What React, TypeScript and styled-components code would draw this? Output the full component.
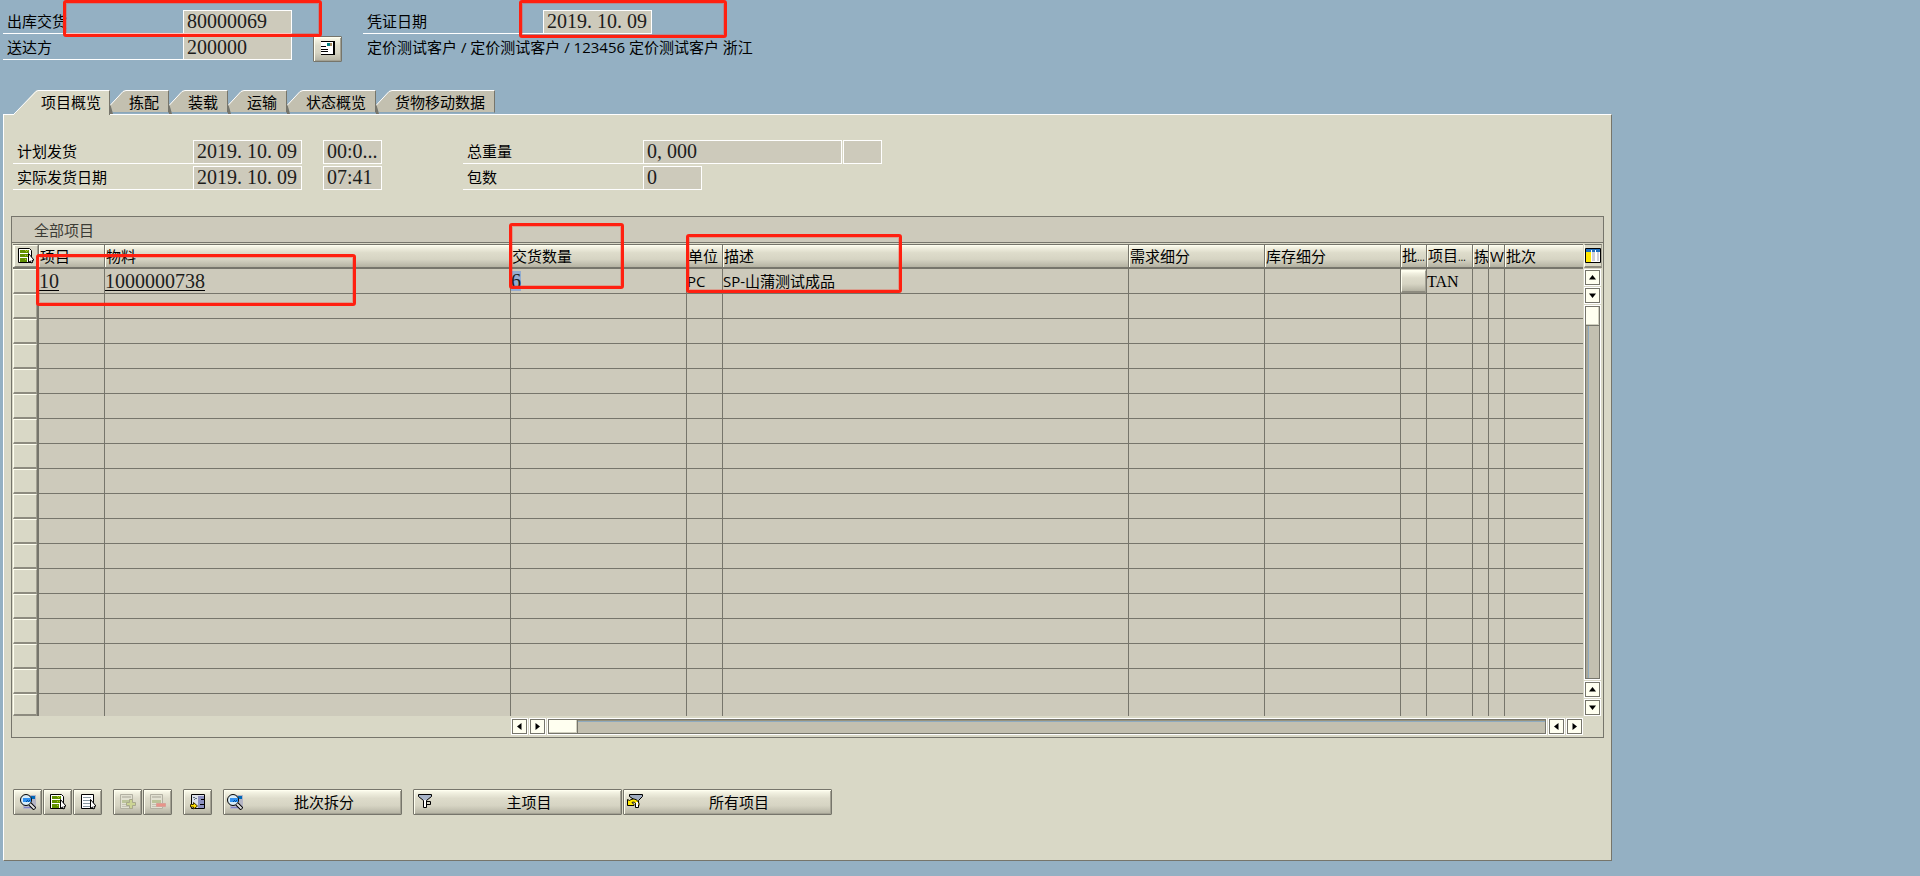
import React from 'react';
import styled, { createGlobalStyle, css } from 'styled-components';

const c = {
  desk: '#94b0c3',
  panel: '#d9d8c6',
  field: '#cdcabb',
  line: '#76756b',
  light: '#fffff0',
  shade: '#a3a193',
  tab: '#c3c0b0',
  mark: '#ff2010',
};
const bevel = `linear-gradient(#fffff0 0, #f1f0e0 12%, #dedccb 35%, #d6d4c3 65%, #b4b2a2 100%)`;

const Global = createGlobalStyle`
  * { box-sizing: border-box; }
  html { background: ${c.desk}; }
  body {
    margin: 0;
    color: #000;
    font-family: "Open Sans", "Noto Sans CJK SC", sans-serif;
    font-size: 15px;
    line-height: 20px;
  }
  button, input { font: inherit; color: inherit; border-radius: 0; }
`;

const Page = styled.div`
  position: relative;
  padding: 10px 0 15px 3px;
`;
const FieldGrid = styled.div<{ $cols: string }>`
  display: grid;
  grid-template-columns: ${(p) => p.$cols};
  row-gap: 2px;
`;
const Field = styled.div`
  display: flex;
  height: 24px;
`;
const Label = styled.label`
  width: 180px;
  flex: none;
  padding: 1px 4px 0;
  border-bottom: 1px solid #fff;
  white-space: nowrap;
`;
const Value = styled.input<{ $w: number }>`
  width: ${(p) => p.$w}px;
  flex: none;
  height: 24px;
  padding: 0 3px 2px;
  border: 1px solid #fff;
  background: ${c.field};
  color: #1c1c1c;
  font: 20px/20px "Liberation Serif", "Noto Sans CJK SC", serif;
  outline: none;
`;
const Address = styled.div`
  padding: 1px 4px 0;
  white-space: nowrap;
`;
const Gap = styled.span<{ $w: number }>`
  width: ${(p) => p.$w}px;
  flex: none;
`;

const Button = styled.button<{ $w: number }>`
  width: ${(p) => p.$w}px;
  height: 26px;
  flex: none;
  display: flex;
  align-items: center;
  justify-content: center;
  padding: 0 3px;
  border: 1px solid ${c.line};
  border-radius: 1px;
  background: ${bevel};
  box-shadow: inset 1px 1px 0 ${c.light}, inset -1px -1px 0 ${c.shade};
`;
const Caption = styled.span`
  flex: 1;
  padding-left: 7px;
  text-align: center;
`;

const Tabs = styled.div`
  display: flex;
  height: 24px;
  margin: 30px 0 0 11px;
  position: relative;
`;
const TabButton = styled.button<{ $active?: boolean }>`
  display: flex;
  height: 24px;
  padding: 0;
  border: 0;
  background: none;
  white-space: nowrap;
  ${(p) => p.$active && css`height: 25px;`}
`;
const TabFace = styled.span<{ $active?: boolean }>`
  height: 100%;
  padding: 1px ${(p) => (p.$active ? 8 : 9)}px 0 3px;
  border-top: 1px solid #fff;
  border-right: 1px solid ${c.line};
  background: ${(p) => (p.$active ? c.panel : c.tab)};
  ${(p) => !p.$active && css`height: 23px; border-bottom: 1px solid #8aa6b9;`}
`;

const Panel = styled.main`
  margin-right: 308px;
  padding: 25px 7px 45px 7px;
  border: 1px solid ${c.line};
  border-top-color: #fff;
  border-left-color: #fff;
  background: ${c.panel};
`;
const Indent = styled.div`
  padding-left: 2px;
`;
const Group = styled.section`
  margin-top: 26px;
  border: 1px solid ${c.line};
`;
const GroupTitle = styled.h2`
  height: 26px;
  margin: 0;
  padding: 3px 22px 0;
  border-bottom: 1px solid ${c.line};
  background: ${c.field};
  color: #3c3c36;
  font-size: 15px;
  font-weight: 400;
  line-height: 20px;
`;
const GridArea = styled.div`
  display: flex;
  padding: 1px 0 1px 1px;
`;
const Table = styled.table`
  flex: 1;
  width: 0;
  table-layout: fixed;
  border-collapse: separate;
  border-spacing: 0;
`;
const Col = styled.col<{ $w?: number }>`
  ${(p) => p.$w && css`width: ${p.$w}px;`}
`;
const Th = styled.th`
  height: 25px;
  padding: 0 0 0 1px;
  border-top: 1px solid ${c.line};
  border-right: 1px solid ${c.line};
  border-bottom: 2px solid ${c.line};
  background: ${bevel};
  box-shadow: inset 1px 1px 0 ${c.light};
  overflow: hidden;
  font-weight: 400;
  text-align: left;
  white-space: nowrap;
  &:last-child { border-right: 0; }
`;
const Dots = styled.span`
  font-size: 10px;
`;
const Row = styled.tr`
  height: 25px;
  &:last-child { height: 22px; }
`;
const Td = styled.td`
  padding: 0;
  border-right: 1px solid ${c.line};
  border-bottom: 1px solid ${c.line};
  background: ${c.field};
  white-space: nowrap;
  overflow: hidden;
  &:last-child { border-right: 0; }
  ${Row}:last-child & { border-bottom: 0; }
`;
const SelectCell = styled(Td)`
  border-right: 2px solid ${c.line};
  border-bottom: 0;
`;
const CellButton = styled.button`
  display: flex;
  align-items: center;
  justify-content: center;
  width: 100%;
  height: 25px;
  padding: 0;
  border: solid;
  border-width: 1px 1px 2px 1px;
  border-color: ${c.light} ${c.shade} #8d8b7f ${c.light};
  background: ${c.panel};
  ${Row}:last-child & { height: 22px; }
`;
const BatchButton = styled(CellButton)`
  height: 23px;
  background: ${bevel};
`;
const HeadButton = styled(CellButton)`
  height: 22px;
  border-width: 1px;
`;
const CellLink = styled.a`
  display: inline-block;
  height: 20px;
  border-bottom: 1px solid #000;
  color: #1c1c1c;
  font: 20px/20px "Liberation Serif", serif;
  text-decoration: none;
  vertical-align: top;
`;
const Quantity = styled.span`
  display: inline-block;
  height: 20px;
  background: #94acd0;
  color: #1c1c1c;
  font: 20px/20px "Liberation Serif", serif;
  vertical-align: top;
`;
const Category = styled.span`
  font: 16px/20px "Liberation Serif", serif;
`;
const FootCell = styled.td`
  height: 20px;
  padding: 1px 0 0;
`;

const HBar = styled.div`
  display: flex;
  gap: 1px;
`;
const VBar = styled.div`
  width: 20px;
  flex: none;
  display: flex;
  flex-direction: column;
  align-items: flex-start;
  gap: 1px;
  padding: 0 1px 20px;
`;
const ConfigButton = styled(CellButton)`
  height: 24px;
  flex: none;
  border-top-color: ${c.line};
`;
const ArrowButton = styled.button`
  width: 17px;
  height: 17px;
  flex: none;
  display: flex;
  align-items: center;
  justify-content: center;
  padding: 0;
  border: 1px solid #fff;
  background: ${c.light};
  box-shadow: inset 0 0 0 1px ${c.line};
`;
const Track = styled.div<{ $vertical?: boolean }>`
  flex: 1;
  display: flex;
  flex-direction: ${(p) => (p.$vertical ? 'column' : 'row')};
  padding: 2px;
  border: 1px solid #fff;
  background: ${c.tab};
  box-shadow: ${(p) => (p.$vertical
    ? `inset 0 0 0 1px ${c.line}, inset 3px 0 0 #aaa798, inset 4px 0 0 #8fabc0`
    : `inset 0 0 0 1px ${c.line}, inset 0 2px 0 #96937f, inset 0 3px 0 #8fabc0`)};
  padding: 1px;
  ${(p) => p.$vertical && css`width: 17px;`}
`;
const Thumb = styled.div<{ $vertical?: boolean }>`
  ${(p) => (p.$vertical
    ? css`height: 19px; border-bottom: 1px solid ${c.line};`
    : css`width: 29px; border-right: 1px solid ${c.line};`)}
  background: ${c.light};
  box-shadow: inset -1px -1px 0 #d0cfbe;
`;

const Toolbar = styled.div`
  display: flex;
  gap: 1px;
  margin-top: 51px;
  padding-left: 2px;
`;
const Mark = styled.div<{ $x: number; $y: number; $w: number; $h: number }>`
  position: absolute;
  left: ${(p) => p.$x}px;
  top: ${(p) => p.$y}px;
  width: ${(p) => p.$w}px;
  height: ${(p) => p.$h}px;
  border: 3px solid ${c.mark};
  border-radius: 3px;
  box-shadow: inset 0 0 0 1px rgba(255, 32, 16, 0.25);
  pointer-events: none;
`;

const Icon = ({ children }: { children: React.ReactNode }) => (
  <svg width="16" height="16" viewBox="0 0 16 16" aria-hidden="true">{children}</svg>
);
const Pointer = () => (
  <path d="M10.500 5.500v9l2-1.500 1 2 1.500-1-1-1.500 2-.5z" fill="#fff" stroke="#000" strokeWidth="1" />
);
const Magnifier = () => (
  <Icon>
    <path d="M3 1h13v14H3z" fill="#b4b4c4" />
    <path d="M11 2h4v3h-4z" fill="#0068b8" />
    <path d="M4 13h7v1H4z" fill="#8080c8" />
    <circle cx="6" cy="6" r="5.500" fill="#d8ecf8" stroke="#000" />
    <path d="M3 4h8v4H3z" fill="#3090f0" />
    <path d="M7 6h1v1H7zM9 6h1v1H9zM8 7h1v1H8zM6 7h1v1H6z" fill="#0050a0" />
    <path d="M10 10l5 5" stroke="#000" strokeWidth="4" />
    <path d="M10 10l4.500 4.500" stroke="#e0e0e0" strokeWidth="2" />
  </Icon>
);
const SelectAll = () => (
  <Icon>
    <path d="M.5.500h11l2 2v12H.5z" fill="#fff" stroke="#000" />
    <path d="M2 2h9v3H2zM2 6h9v3H2zM2 10h7v4H2z" fill="#609000" />
    <path d="M7 2h1v1H7zM9 2h1v1H9zM8 3h1v1H8zM7 7h1v1H7zM9 7h1v1H9zM7 11h1v1H7z" fill="#b0d020" />
    <Pointer />
  </Icon>
);
const DeselectAll = () => (
  <Icon>
    <path d="M1.500.500h12v14h-12z" fill="#fff" stroke="#000" />
    <path d="M3 3h8v1H3zM3 6h8v1H3zM3 9h7v1H3zM3 12h7v1H3z" fill="#8898a0" />
    <Pointer />
  </Icon>
);
const EditRow = ({ remove }: { remove?: boolean }) => (
  <Icon>
    <path d="M.5.500h12v14H.5z" fill="#e2e1d2" stroke="#b2b0a2" />
    <path d="M2 2h9v2H2zM2 10h7v1H2zM2 12h7v1H2z" fill="#c4c2b4" />
    <path d="M2 6h9v3H2z" fill="#bcc49a" />
    {remove
      ? <path d="M6.500 9.500h9v3h-9z" fill="#e89488" stroke="#d8a098" />
      : <path d="M9.500 5.500h3v3h3v3h-3v3h-3v-3h-3v-3h3z" fill="#ccd494" stroke="#a8a88c" />}
  </Icon>
);
const Transfer = () => (
  <Icon>
    <path d="M1.500.500h13v14h-13z" fill="#dce0e8" stroke="#000" />
    <path d="M8 2h6v12H8z" fill="#8c90c0" />
    <path d="M3 3h2v1H3zM5 4h2v1H5zM4 5h1v1H4z" fill="#607080" />
    <path d="M11 5h3v1h-3zM10 10h4v1h-4z" fill="#000" />
    <path d="M.5 10.500h3v-2l4 3.500-4 3v-2h-3z" fill="#ffe000" stroke="#403000" />
  </Icon>
);
const Funnel = () => (
  <Icon>
    <path d="M1.500.500h13v2l-5 4v7h-3v-7l-5-4z" fill="#a8b4c8" stroke="#000" />
    <path d="M7 6h2v7H7z" fill="#fff" />
    <path d="M10 7.500h3.500v3h-3.500" fill="none" stroke="#000" />
  </Icon>
);
const FunnelBack = () => (
  <Icon>
    <path d="M2.500.500h13v2l-4 4v7h-3v-7l-6-4z" fill="#a0acc0" stroke="#000" />
    <path d="M.5 11.500v-6l2 1c3-2.500 8-2 9.500 3v2h-3c0-3-2-4-4-3l2 2v1z" fill="#ffe800" stroke="#000" />
    <path d="M9 8h2v5H9z" fill="#fff" />
  </Icon>
);
const Detail = () => (
  <Icon>
    <path d="M1 1h13v12H1z" fill="#fff" />
    <path d="M1 0h14v14H1v-1h12V1H1z" fill="#000" />
    <path d="M7 2h3v3H7z" fill="#008080" />
    <path d="M10 2h2v3h-2z" fill="#a08860" />
    <path d="M1 5h5v1H1zM1 8h7v1H1zM1 10h7v1H1z" fill="#000" />
  </Icon>
);
const Configure = () => (
  <Icon>
    <path d="M.5.500h15v14H.5z" fill="#fff" stroke="#000" />
    <path d="M1 1h14v3H1z" fill="#2070c0" />
    <path d="M1 4h5v10H1z" fill="#ffe800" />
    <path d="M7 4h3v9H7zM12 4h2v9h-2z" fill="#d0d0d8" />
    <path d="M6 2h1v2H6zM10 2h1v2h-1z" fill="#fff" />
  </Icon>
);
const turns = { up: 0, right: 90, down: 180, left: 270 };
const Arrow = ({ to }: { to: keyof typeof turns }) => (
  <ArrowButton aria-label={to}>
    <svg width="9" height="9" viewBox="0 0 9 9" aria-hidden="true">
      <path d="M4.500 2 8 6.500H1z" transform={`rotate(${turns[to]} 4.500 4.500)`} />
    </svg>
  </ArrowButton>
);

const tabNames = ['项目概览', '拣配', '装载', '运输', '状态概览', '货物移动数据'];
const Tab = ({ name, active }: { name: string; active?: boolean }) => (
  <TabButton $active={active} role="tab" aria-selected={!!active}>
    {active ? (
      <svg width="24" height="25" viewBox="0 0 24 25" aria-hidden="true">
        <path d="M0 24.500 22 .5h2V25H0z" fill={c.panel} />
        <path d="M0 24 22 1.500 24 .5" fill="none" stroke="#fff" />
      </svg>
    ) : (
      <svg width="16" height="24" viewBox="0 0 16 24" aria-hidden="true">
        <path d="M0 15 14 .5h2V23H3z" fill={c.tab} />
        <path d="M0 13v11h3z" fill={c.line} />
        <path d="M0 15.500 13 1.500 16 .5" fill="none" stroke="#fff" />
        <path d="M3 22.500h13" stroke="#8aa6b9" />
      </svg>
    )}
    <TabFace $active={active}>{name}</TabFace>
  </TabButton>
);

const widths = [26, 66, 0, 176, 36, 0, 136, 136, 26, 46, 16, 16, 78];
const heads: React.ReactNode[] = [
  '项目', '物料', '交货数量', '单位', '描述', '需求细分', '库存细分',
  <>批<Dots>…</Dots></>, <>项目<Dots>…</Dots></>, '拣', 'W', '批次',
];
const item: React.ReactNode[] = [
  <CellLink href="#item">10</CellLink>,
  <CellLink href="#material">1000000738</CellLink>,
  <Quantity>6</Quantity>,
  'PC',
  'SP-山蒲测试成品',
  '', '',
  <BatchButton aria-label="批次" />,
  <Category>TAN</Category>,
  '', '', '',
];
const rows = [item, ...Array.from({ length: 17 }, () => heads.map(() => ''))];

export default function App() {
  return (
    <>
      <Global />
      <Page>
        <FieldGrid $cols="360px 1fr">
          <Field>
            <Label htmlFor="delivery">出库交货</Label>
            <Value id="delivery" $w={109} readOnly value="80000069" />
          </Field>
          <Field>
            <Label htmlFor="docdate">凭证日期</Label>
            <Value id="docdate" $w={109} readOnly value="2019. 10. 09" />
          </Field>
          <Field>
            <Label htmlFor="shipto">送达方</Label>
            <Value id="shipto" $w={109} readOnly value="200000" />
            <Gap $w={21} />
            <Button $w={29} aria-label="送达方明细"><Detail /></Button>
          </Field>
          <Address>定价测试客户 / 定价测试客户 / 123456 定价测试客户 浙江</Address>
        </FieldGrid>

        <Tabs role="tablist">
          {tabNames.map((name, i) => <Tab key={name} name={name} active={i === 0} />)}
        </Tabs>

        <Panel>
          <Indent>
            <FieldGrid $cols="450px 1fr">
              <Field>
                <Label htmlFor="plan">计划发货</Label>
                <Value id="plan" $w={109} readOnly value="2019. 10. 09" />
                <Gap $w={21} />
                <Value $w={59} aria-label="计划发货时间" readOnly value="00:0..." />
              </Field>
              <Field>
                <Label htmlFor="weight">总重量</Label>
                <Value id="weight" $w={199} readOnly value="0, 000" />
                <Gap $w={1} />
                <Value $w={39} aria-label="重量单位" readOnly value="" />
              </Field>
              <Field>
                <Label htmlFor="actual">实际发货日期</Label>
                <Value id="actual" $w={109} readOnly value="2019. 10. 09" />
                <Gap $w={21} />
                <Value $w={59} aria-label="实际发货时间" readOnly value="07:41" />
              </Field>
              <Field>
                <Label htmlFor="packs">包数</Label>
                <Value id="packs" $w={59} readOnly value="0" />
              </Field>
            </FieldGrid>
          </Indent>

          <Group>
            <GroupTitle>全部项目</GroupTitle>
            <GridArea>
              <Table>
                <colgroup>{widths.map((w, i) => <Col key={i} $w={w} />)}</colgroup>
                <thead>
                  <tr>
                    <Th><HeadButton aria-label="全选"><SelectAll /></HeadButton></Th>
                    {heads.map((h, i) => <Th key={i}>{h}</Th>)}
                  </tr>
                </thead>
                <tbody>
                  {rows.map((cells, r) => (
                    <Row key={r}>
                      <SelectCell><CellButton aria-label={`选择行 ${r + 1}`} /></SelectCell>
                      {cells.map((cell, i) => <Td key={i}>{cell}</Td>)}
                    </Row>
                  ))}
                </tbody>
                <tfoot>
                  <tr>
                    <FootCell colSpan={3} />
                    <FootCell colSpan={10}>
                      <HBar>
                        <Arrow to="left" />
                        <Arrow to="right" />
                        <Track><Thumb /></Track>
                        <Arrow to="left" />
                        <Arrow to="right" />
                      </HBar>
                    </FootCell>
                  </tr>
                </tfoot>
              </Table>
              <VBar>
                <ConfigButton aria-label="配置"><Configure /></ConfigButton>
                <Arrow to="up" />
                <Arrow to="down" />
                <Track $vertical><Thumb $vertical /></Track>
                <Arrow to="up" />
                <Arrow to="down" />
              </VBar>
            </GridArea>
          </Group>

          <Toolbar>
            <Button $w={29} aria-label="明细"><Magnifier /></Button>
            <Button $w={29} aria-label="全选"><SelectAll /></Button>
            <Button $w={29} aria-label="取消全选"><DeselectAll /></Button>
            <Gap $w={9} />
            <Button $w={29} aria-label="插入行"><EditRow /></Button>
            <Button $w={29} aria-label="删除行"><EditRow remove /></Button>
            <Gap $w={9} />
            <Button $w={29} aria-label="转移"><Transfer /></Button>
            <Gap $w={9} />
            <Button $w={179}><Magnifier /><Caption>批次拆分</Caption></Button>
            <Gap $w={9} />
            <Button $w={209}><Funnel /><Caption>主项目</Caption></Button>
            <Button $w={209}><FunnelBack /><Caption>所有项目</Caption></Button>
          </Toolbar>
        </Panel>

        <Mark $x={63} $y={0} $w={259} $h={37} />
        <Mark $x={519} $y={0} $w={208} $h={38} />
        <Mark $x={36} $y={254} $w={320} $h={52} />
        <Mark $x={509} $y={223} $w={115} $h={66} />
        <Mark $x={686} $y={234} $w={216} $h={59} />
      </Page>
    </>
  );
}
